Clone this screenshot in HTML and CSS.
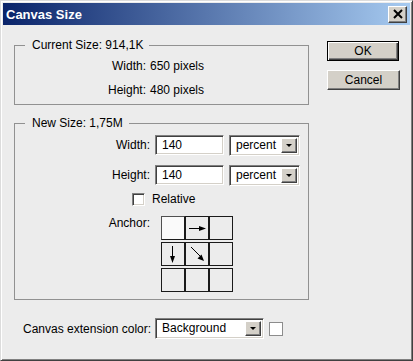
FILE: index.html
```html
<!DOCTYPE html>
<html>
<head>
<meta charset="utf-8">
<title>Canvas Size</title>
<link rel="stylesheet" href="styles.css">
</head>
<body>
<div class="window">
  <div class="titlebar">
    <span class="title">Canvas Size</span>
    <div class="close">
      <svg width="10" height="10" viewBox="0 0 10 10"><path d="M1 1 L9 9 M9 1 L1 9" stroke="#000" stroke-width="2" fill="none"/></svg>
    </div>
  </div>
  <div class="body">
    <div class="main">
      <fieldset class="group g1">
        <legend>Current Size: 914,1K</legend>
        <div class="info-row"><span class="label l1">Width:</span><span class="value">650 pixels</span></div>
        <div class="info-row"><span class="label l1">Height:</span><span class="value">480 pixels</span></div>
      </fieldset>
      <fieldset class="group g2">
        <legend>New Size: 1,75M</legend>
        <div class="field-row">
          <span class="label l2">Width:</span>
          <div class="input">140</div>
          <div class="select unit"><span class="sel-text">percent</span><span class="drop"><span class="tri"></span></span></div>
        </div>
        <div class="field-row second">
          <span class="label l2">Height:</span>
          <div class="input">140</div>
          <div class="select unit"><span class="sel-text">percent</span><span class="drop"><span class="tri"></span></span></div>
        </div>
        <div class="check-row"><span class="checkbox"></span><span>Relative</span></div>
        <div class="anchor-row">
          <span class="label l2 anchor-label">Anchor:</span>
          <div class="anchor-grid">
            <div class="cell selected"></div>
            <div class="cell"><svg width="22" height="22" viewBox="0 0 22 22"><path d="M3 11.5 H14" stroke="#000" stroke-width="1"/><polygon points="13,9 20,11.5 13,14" fill="#000"/></svg></div>
            <div class="cell"></div>
            <div class="cell"><svg width="22" height="22" viewBox="0 0 22 22"><path d="M10.5 3 V14" stroke="#000" stroke-width="1"/><polygon points="8,13 10.5,20 13,13" fill="#000"/></svg></div>
            <div class="cell"><svg width="22" height="22" viewBox="0 0 22 22"><path d="M5 4 L14 13" stroke="#000" stroke-width="1"/><polygon points="11.5,15.5 18,18 15.5,11.5" fill="#000"/></svg></div>
            <div class="cell"></div>
            <div class="cell"></div>
            <div class="cell"></div>
            <div class="cell"></div>
          </div>
        </div>
      </fieldset>
      <div class="ext-row">
        <span class="ext-label">Canvas extension color:</span>
        <div class="select ext"><span class="sel-text">Background</span><span class="drop"><span class="tri"></span></span></div>
        <span class="swatch"></span>
      </div>
    </div>
    <div class="buttons">
      <div class="btn default">OK</div>
      <div class="btn">Cancel</div>
    </div>
  </div>
</div>
</body>
</html>
```
FILE: styles.css
```css
html, body {
  margin: 0;
  padding: 0;
  background: #ececec;
}
body {
  font-family: "Liberation Sans", Arial, sans-serif;
  font-size: 12px;
  color: #000;
}
.window {
  box-sizing: border-box;
  width: 413px;
  height: 361px;
  border: 1px solid;
  border-color: #dcdcdc #404040 #404040 #dcdcdc;
  box-shadow: inset 1px 1px #ffffff, inset -1px -1px #808080;
  padding: 2px;
  background: #ececec;
  display: flex;
  flex-direction: column;
}
.titlebar {
  height: 22px;
  flex: none;
  display: flex;
  align-items: center;
  justify-content: space-between;
  background: linear-gradient(to right, #0a246a, #a6caf0);
}
.title {
  color: #fff;
  font-weight: bold;
  font-size: 13px;
  padding-left: 3px;
}
.close {
  box-sizing: border-box;
  width: 19px;
  height: 17px;
  margin-right: 3px;
  background: #d4d0c8;
  border: 1px solid;
  border-color: #ffffff #404040 #404040 #ffffff;
  box-shadow: inset -1px -1px #808080;
  display: flex;
  align-items: center;
  justify-content: center;
}
.close svg { display: block; margin-top: -1px; }
.body {
  flex: 1;
  display: flex;
  padding-left: 11px;
}
.main {
  width: 295px;
  padding-top: 13px;
}
.group {
  box-sizing: border-box;
  width: 295px;
  margin: 0;
  padding: 0;
  border: 1px solid #919191;
  min-inline-size: 0;
}
.group legend {
  margin-left: 10px;
  padding: 0 6px 0 7px;
  line-height: 14px;
  height: 14px;
}
.g1 { padding-top: 2px; padding-bottom: 2px; }
.g2 { margin-top: 11px; padding-top: 5px; padding-bottom: 7px; }
.info-row {
  display: flex;
  height: 24px;
  align-items: center;
  gap: 4px;
}
.label { text-align: right; flex: none; }
.l1 { width: 131px; }
.l2 { width: 135px; }
.field-row {
  display: flex;
  height: 20px;
  align-items: center;
  gap: 5px;
}
.field-row.second { margin-top: 10px; }
.input {
  box-sizing: border-box;
  width: 69px;
  height: 20px;
  background: #fff;
  border: 1px solid;
  border-color: #808080 #ffffff #ffffff #808080;
  box-shadow: inset 1px 1px #404040, inset -1px -1px #d4d0c8;
  padding-left: 6px;
  line-height: 18px;
}
.select {
  box-sizing: border-box;
  height: 21px;
  background: #fff;
  border: 1px solid;
  border-color: #808080 #ffffff #ffffff #808080;
  box-shadow: inset 1px 1px #404040, inset -1px -1px #d4d0c8;
  padding: 2px 2px 2px 6px;
  display: flex;
  align-items: center;
  justify-content: space-between;
}
.unit { width: 71px; }
.ext { width: 109px; }
.sel-text { line-height: 17px; }
.drop {
  box-sizing: border-box;
  width: 16px;
  height: 15px;
  background: #d4d0c8;
  border: 1px solid;
  border-color: #ffffff #404040 #404040 #ffffff;
  box-shadow: inset -1px -1px #808080;
  display: flex;
  align-items: center;
  justify-content: center;
}
.tri {
  width: 0;
  height: 0;
  border-left: 3px solid transparent;
  border-right: 3px solid transparent;
  border-top: 3px solid #000;
}
.check-row {
  display: flex;
  align-items: center;
  height: 16px;
  margin-top: 6px;
  padding-left: 117px;
  gap: 7px;
}
.checkbox {
  box-sizing: border-box;
  width: 13px;
  height: 13px;
  background: #fff;
  border: 1px solid;
  border-color: #808080 #ffffff #ffffff #808080;
  box-shadow: inset 1px 1px #404040, inset -1px -1px #d4d0c8;
}
.anchor-row {
  display: flex;
  align-items: flex-start;
  margin-top: 9px;
  gap: 11px;
}
.anchor-label { line-height: 14px; margin-top: 0; }
.anchor-grid {
  display: grid;
  grid-template-columns: repeat(3, 24px);
  grid-auto-rows: 24px;
  row-gap: 2px;
}
.cell {
  box-sizing: border-box;
  border: 1px solid #1a1a1a;
  background: #ececec;
}
.cell.selected { background: #fafafa; border-color: #505050 #1a1a1a #1a1a1a #505050; }
.cell svg { display: block; }
.ext-row {
  display: flex;
  align-items: center;
  height: 21px;
  margin-top: 18px;
  padding-left: 9px;
}
.ext-label { margin-right: 4px; }
.swatch {
  box-sizing: border-box;
  width: 14px;
  height: 14px;
  margin-left: 5px;
  background: #fff;
  border: 1px solid #8c8c8c;
}
.buttons {
  margin-left: 18px;
  padding-top: 16px;
  display: flex;
  flex-direction: column;
  gap: 9px;
}
.btn {
  box-sizing: border-box;
  width: 73px;
  height: 20px;
  background: #d4d0c8;
  border: 1px solid;
  border-color: #ffffff #404040 #404040 #ffffff;
  box-shadow: inset -1px -1px #808080;
  text-align: center;
  line-height: 18px;
}
.btn.default {
  width: 72px;
  border: 1px solid #000;
  box-shadow: inset 1px 1px #ffffff, inset -1px -1px #404040, inset -2px -2px #808080;
}
```
